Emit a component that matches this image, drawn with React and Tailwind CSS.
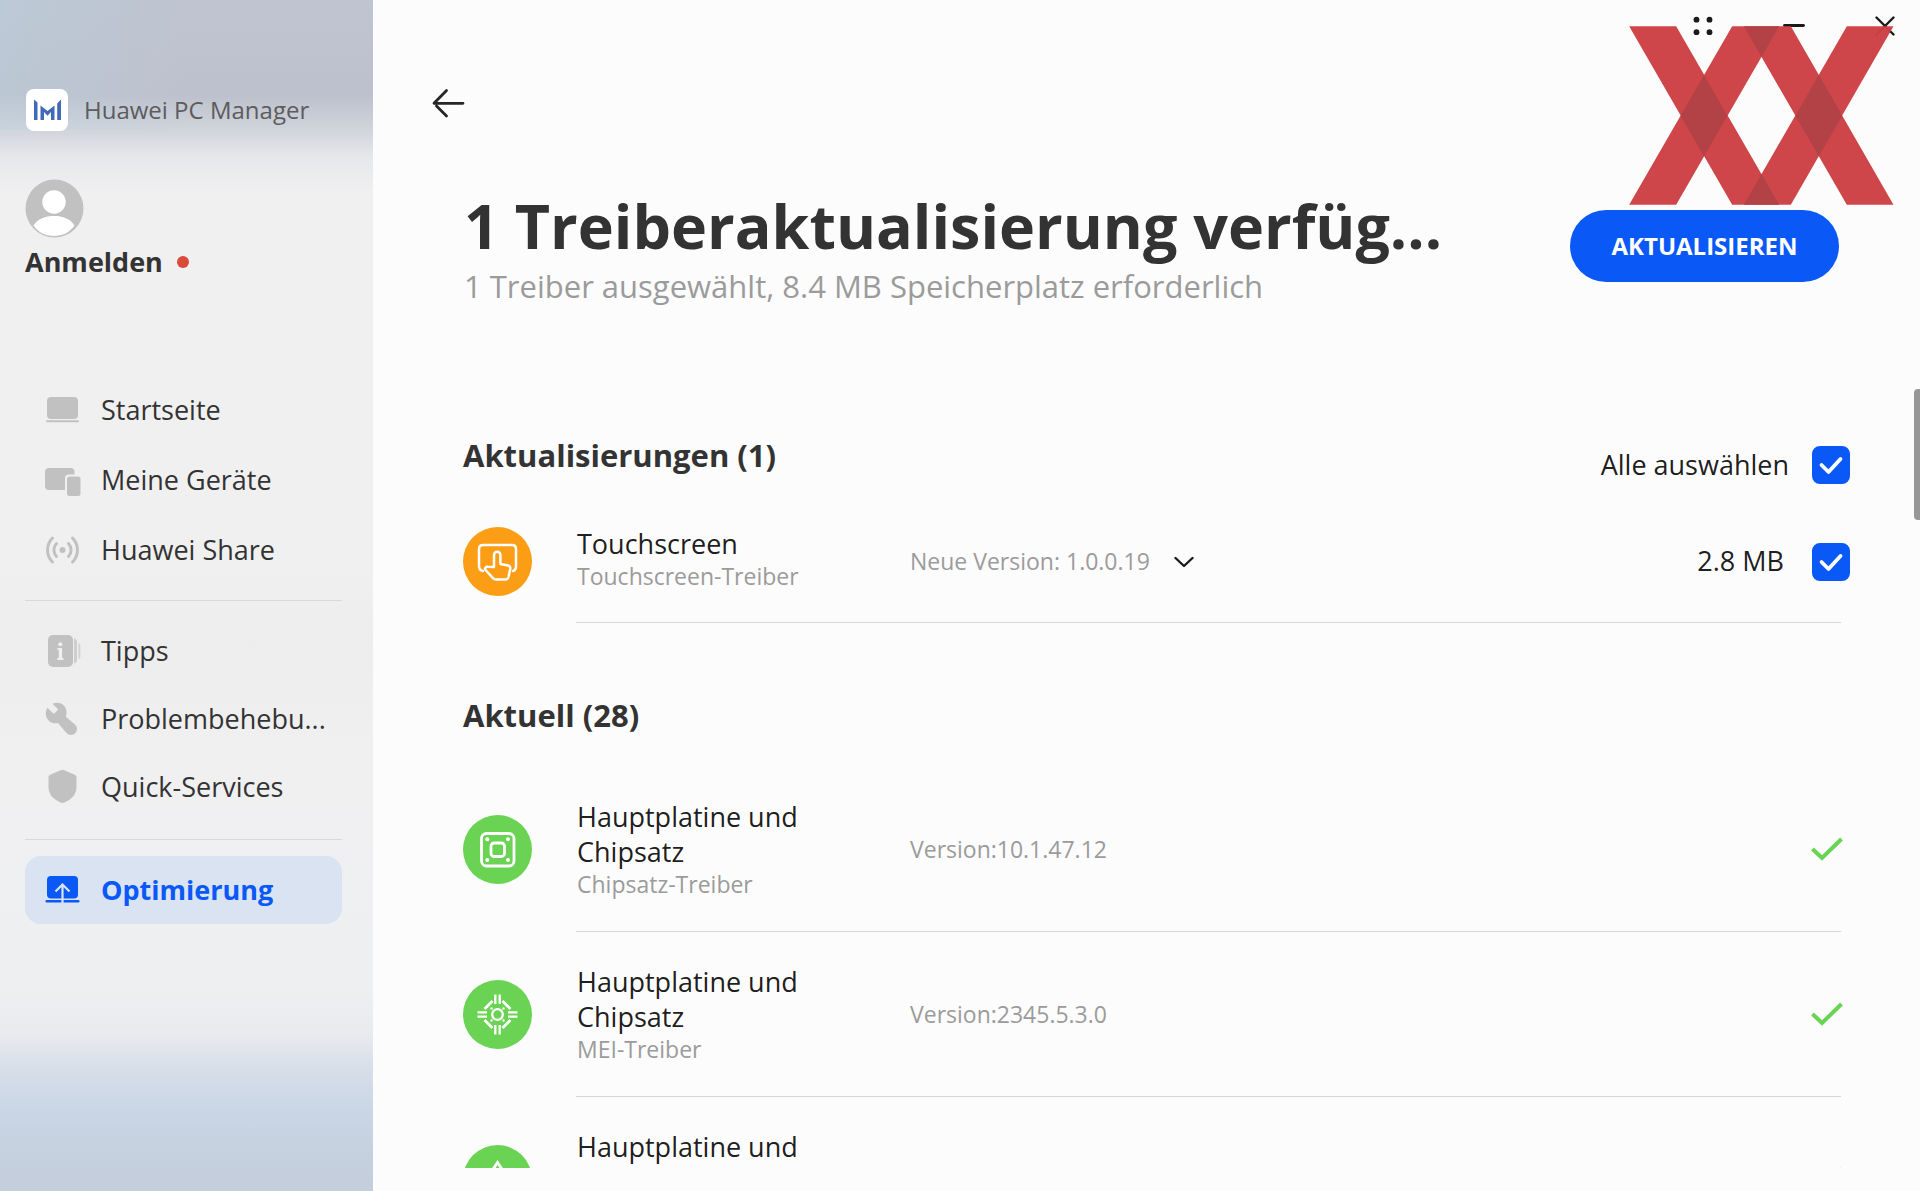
import React, { useState } from 'react';

const LaptopIcon = () => (
  <svg viewBox="0 0 36 36" className="h-9 w-9 shrink-0" fill="currentColor" aria-hidden="true">
    <rect x="2" y="5" width="31" height="22" rx="4" />
    <rect x="1" y="28.3" width="33" height="2" rx="1" />
  </svg>
);

const DevicesIcon = () => (
  <svg viewBox="0 0 36 36" className="h-9 w-9 shrink-0" fill="currentColor" aria-hidden="true">
    <path d="M4 6h21.5a4 4 0 0 1 4 4v2.500H24a4 4 0 0 0-4 4V28H4a4 4 0 0 1-4-4V10a4 4 0 0 1 4-4z" />
    <rect x="22" y="14.5" width="13.5" height="19.5" rx="2.5" />
  </svg>
);

const ShareIcon = () => (
  <svg viewBox="0 0 36 36" className="h-9 w-9 shrink-0" fill="none" stroke="currentColor" strokeWidth="3" strokeLinecap="round" aria-hidden="true">
    <circle cx="17.5" cy="18" r="3" fill="currentColor" stroke="none" />
    <path d="M11.500 11.500a9.500 9.500 0 0 0 0 13M23.500 11.500a9.500 9.500 0 0 1 0 13" />
    <path d="M7.500 6a17 17 0 0 0 0 24M27.500 6a17 17 0 0 1 0 24" />
  </svg>
);

const TipsIcon = () => (
  <svg viewBox="0 0 36 36" className="h-9 w-9 shrink-0" fill="currentColor" aria-hidden="true">
    <rect x="3" y="2" width="25" height="32" rx="5" />
    <path d="M29 5.500c2 .5 3 1.500 3 3.500v18c0 2-1 3-3 3.500z" opacity="0.7" />
    <path d="M33.500 10c1.200.6 1.800 1.400 1.800 2.800v10.400c0 1.400-.6 2.200-1.800 2.800z" opacity="0.6" />
    <g fill="#f0f0f0">
      <circle cx="15.3" cy="11.3" r="2" />
      <path d="M12.500 15h4.600v10h1.400v2h-6.200v-2h1.500v-8h-1.300z" />
    </g>
  </svg>
);

const WrenchIcon = () => (
  <svg viewBox="0 0 36 36" className="h-9 w-9 shrink-0" fill="currentColor" aria-hidden="true">
    <path d="M7.500 2.700 12.300 7.500a1.500 1.500 0 0 1 0 2.100L9.900 12a1.500 1.500 0 0 1-2.100 0L2.400 6.800A11.300 11.300 0 0 0 1 15c1.600 5.600 6.700 8.200 12 7l8.700 10.300a6 6 0 0 0 8.600-8.500L20.800 15.800C22.500 10 21 5 16.500 2.800A11 11 0 0 0 7.500 2.700z" />
  </svg>
);

const ShieldIcon = () => (
  <svg viewBox="0 0 36 36" className="h-9 w-9 shrink-0" fill="currentColor" aria-hidden="true">
    <path d="M15.600 1.200a4.500 4.500 0 0 1 3.800 0l9.800 4.400c1.500.7 2.300 1.600 2.300 3.200v9c0 7.500-4 12-12 15.600a4.500 4.500 0 0 1-4 0c-8-3.600-12-8.100-12-15.600v-9c0-1.600.8-2.500 2.300-3.200z" />
  </svg>
);

const OptimizeIcon = () => (
  <svg viewBox="0 0 36 36" className="h-9 w-9 shrink-0" fill="currentColor" aria-hidden="true">
    <rect x="2" y="4" width="31" height="22.5" rx="4" />
    <rect x="0.5" y="28" width="34" height="2.5" rx="1" />
    <path d="M17.500 31.500V13.500M10.500 19.500l7-7 7 7" fill="none" stroke="#dae3f2" strokeWidth="2.2" />
  </svg>
);

const TouchIcon = () => (
  <svg viewBox="0 0 69 69" className="h-full w-full" fill="none" stroke="#fff" strokeWidth="2.5" strokeLinecap="round" strokeLinejoin="round" aria-hidden="true">
    <path d="M20 44c-2.500-.5-4-2-4-5V22c0-2.500 1.500-4 4-4h29c2.500 0 4 1.500 4 4v17c0 3-1 4.500-3 5" />
    <path d="M31 40V28a3.200 3.200 0 0 1 6.400 0v9l7.600 1.500c1.800.5 2.500 1.700 2.200 3.500L45.500 50c-.5 1.700-1.300 2.500-3 2.500H33c-1.300 0-2.200-.4-3-1.300L22.500 43c-1.200-1.500.3-3.600 2.300-3.200z" />
  </svg>
);

const ChipsetIcon = () => (
  <svg viewBox="0 0 69 69" className="h-full w-full" fill="none" stroke="#fff" strokeWidth="2.8" aria-hidden="true">
    <rect x="18.5" y="18.5" width="32.5" height="32.5" rx="5" />
    <rect x="28" y="28" width="13.5" height="13.5" rx="3" />
    <g fill="#fff" stroke="none">
      <circle cx="24.3" cy="24.3" r="2" />
      <circle cx="45" cy="24.3" r="2" />
      <circle cx="24.3" cy="45" r="2" />
      <circle cx="45" cy="45" r="2" />
    </g>
  </svg>
);

const EngineIcon = () => (
  <svg viewBox="0 0 69 69" className="h-full w-full" fill="none" stroke="#fff" strokeWidth="2.3" aria-hidden="true">
    <circle cx="34.5" cy="34.5" r="5.3" />
    <path d="M32.300 14.500V24M36.700 14.500V24M32.300 45v9.500M36.700 45v9.500M14.500 32.300H24M14.500 36.700H24M45 32.300h9.500M45 36.700h9.500" />
    <path d="M21.500 29l8-8M39.500 21l8 8M21.500 40l8 8M39.500 48l8-8" strokeWidth="2.8" />
    <g fill="#fff" stroke="none">
      <circle cx="28.5" cy="28.5" r="1.2" />
      <circle cx="40.5" cy="28.5" r="1.2" />
      <circle cx="28.5" cy="40.5" r="1.2" />
      <circle cx="40.5" cy="40.5" r="1.2" />
    </g>
  </svg>
);

const TriangleIcon = () => (
  <svg viewBox="0 0 69 69" className="h-full w-full" fill="none" stroke="#fff" strokeWidth="2.8" aria-hidden="true">
    <path d="M34.500 17.500 52 44H17z" />
  </svg>
);

const mainNav = [
  { label: 'Startseite', icon: LaptopIcon },
  { label: 'Meine Geräte', icon: DevicesIcon },
  { label: 'Huawei Share', icon: ShareIcon }
];

const helpNav = [
  { label: 'Tipps', icon: TipsIcon },
  { label: 'Problembehebu...', icon: WrenchIcon },
  { label: 'Quick-Services', icon: ShieldIcon }
];

const currentDrivers = [
  { title: 'Hauptplatine und Chipsatz', driver: 'Chipsatz-Treiber', version: 'Version:10.1.47.12', icon: ChipsetIcon },
  { title: 'Hauptplatine und Chipsatz', driver: 'MEI-Treiber', version: 'Version:2345.5.3.0', icon: EngineIcon },
  { title: 'Hauptplatine und Chipsatz', driver: 'Chipsatz-Treiber', version: 'Version:10.1.47.12', icon: TriangleIcon }
];

function NavItem({ label, icon: Icon }) {
  return (
    <a href="#" className="flex h-17 items-center gap-5 rounded-2xl pl-5 text-[#333]">
      <span className="text-[#c1c1c1]"><Icon /></span>
      <span className="whitespace-nowrap">{label}</span>
    </a>
  );
}

function Checkbox({ id, checked, onChange }) {
  return (
    <span className="relative block h-[38px] w-[38px] shrink-0">
      <input
        id={id}
        type="checkbox"
        checked={checked}
        onChange={onChange}
        className="peer block h-full w-full appearance-none rounded-lg border-2 border-gray-400 checked:border-[#0a59f7] checked:bg-[#0a59f7]"
      />
      <svg viewBox="0 0 38 38" className="pointer-events-none absolute inset-0 hidden peer-checked:block" fill="none" stroke="#fff" strokeWidth="3.8" strokeLinecap="round" strokeLinejoin="round" aria-hidden="true">
        <path d="M9.500 19l7 7L28.500 13" />
      </svg>
    </span>
  );
}

function Sidebar() {
  return (
    <aside className="flex w-[373px] shrink-0 flex-col bg-[linear-gradient(to_right,rgba(185,210,225,0.35),rgba(185,200,220,0)_50%),linear-gradient(to_bottom,#bec4d0_0px,#bdc1cd_95px,#d0d4db_130px,#e7e8eb_158px,#f0f0f1_195px,#f0f0f1_560px,#ededee_640px,#f0f0f1_760px,#eeeff1_990px,#e8eaee_1035px,#d6dee9_1070px,#cad6e6_1110px,#c6d1df_1150px,#c3cddb_1191px)] bg-[length:100%_130px,100%_100%] bg-no-repeat pl-[25px] pr-[31px] pt-[89px]">
      <div className="flex items-center gap-4 pl-px">
        <svg viewBox="0 0 42 42" className="h-[42px] w-[42px] rounded-lg bg-white" fill="#4169b8" aria-hidden="true">
          <path d="M8 10.500l3.500 3V31H8zM35 10.500V31h-3.800V14.500zM14.500 16.500l7 5.500 7-5.500V31h-3.500v-8l-3.500 3.800-3.500-3.800v8h-3.500z" />
        </svg>
        <span className="whitespace-nowrap text-2xl text-[#5c5c5e]">Huawei PC Manager</span>
      </div>

      <button type="button" className="mt-12 text-left" aria-label="Anmelden">
        <svg viewBox="0 0 59 59" className="h-[59px] w-[59px]" aria-hidden="true">
          <circle cx="29.5" cy="29.5" r="29" fill="#c1c1c1" />
          <circle cx="29" cy="23" r="11.7" fill="#fff" />
          <path d="M8.500 46.500C13 39.500 20 37 29 37s16 2.500 20.500 9.500C44.500 53.500 37.500 57 29 57S13.500 53.500 8.500 46.500z" fill="#fff" />
        </svg>
        <span className="mt-1.5 flex items-center gap-[14px] text-[27px] font-bold leading-9 text-[#333]">
          Anmelden
          <span className="h-3 w-3 rounded-full bg-[#d94a38]" />
        </span>
      </button>

      <nav className="mt-24 text-[27px]">
        <div className="flex flex-col gap-0.5">
          {mainNav.map((item) => (
            <NavItem key={item.label} {...item} />
          ))}
        </div>
        <hr className="my-4 border-[#d9d9da]" />
        <div className="flex flex-col">
          {helpNav.map((item) => (
            <NavItem key={item.label} {...item} />
          ))}
        </div>
        <hr className="mb-4 mt-[18px] border-[#d9d9da]" />
        <a href="#" aria-current="page" className="flex h-17 items-center gap-5 rounded-2xl bg-[#dae3f2] pl-5 font-bold text-[#0a59f7]">
          <OptimizeIcon />
          Optimierung
        </a>
      </nav>
    </aside>
  );
}

function DriverInfo({ title, driver }) {
  return (
    <div className="w-[333px] shrink-0 pr-[80px]">
      <h3 className="text-[27px] leading-[35px] text-black/90">{title}</h3>
      <p className="text-[23px] leading-[30px] text-[#9b9b9b]">{driver}</p>
    </div>
  );
}

function App() {
  const [selected, setSelected] = useState(true);
  const toggle = () => setSelected(!selected);

  return (
    <div className="relative flex h-screen overflow-hidden bg-[#fcfcfc] font-['Segoe_UI','Open_Sans',sans-serif]">
      <Sidebar />

      <main className="flex min-w-0 flex-1 flex-col pb-[23px]">
        <div className="flex h-[51px] shrink-0 items-center justify-end gap-[21px] text-[#1a1a1a]">
          <button type="button" aria-label="Menü" className="flex h-full w-[70px] items-center justify-center">
            <svg viewBox="0 0 20 20" className="h-5 w-5" fill="currentColor">
              <circle cx="3.5" cy="3.7" r="2.9" />
              <circle cx="16.5" cy="3.7" r="2.9" />
              <circle cx="3.5" cy="16.2" r="2.9" />
              <circle cx="16.5" cy="16.2" r="2.9" />
            </svg>
          </button>
          <button type="button" aria-label="Minimieren" className="flex h-full w-[70px] items-center justify-center">
            <svg viewBox="0 0 22 22" className="h-[22px] w-[22px]" stroke="currentColor" strokeWidth="2.8" strokeLinecap="round">
              <path d="M1.500 10.500h19" />
            </svg>
          </button>
          <button type="button" aria-label="Schließen" className="flex h-full w-[70px] items-center justify-center">
            <svg viewBox="0 0 20 20" className="h-5 w-5" stroke="currentColor" strokeWidth="2.4" strokeLinecap="round">
              <path d="M1.500 1.500l17 17M18.500 1.500l-17 17" />
            </svg>
          </button>
        </div>

        <div className="flex h-[103px] shrink-0 items-center pl-[58px]">
          <button type="button" aria-label="Zurück">
            <svg viewBox="0 0 34 30" className="h-[30px] w-[34px]" fill="none" stroke="#262626" strokeWidth="2.8" strokeLinecap="round" strokeLinejoin="round">
              <path d="M15.500 2.500L3 15.300h29M5.500 18l10 10" />
            </svg>
          </button>
        </div>

        <header className="mt-8 flex shrink-0 items-center justify-between pl-[91px] pr-[81px]">
          <div className="min-w-0">
            <h1 className="whitespace-nowrap text-[61px] font-bold leading-20 text-[#333]">1 Treiberaktualisierung verfüg...</h1>
            <p className="text-[31px] leading-10 text-[#9b9b9b]">1 Treiber ausgewählt, 8.4 MB Speicherplatz erforderlich</p>
          </div>
          <button type="button" className="h-18 w-[269px] shrink-0 rounded-full bg-[#0a59f7] text-2xl font-bold text-white">
            AKTUALISIEREN
          </button>
        </header>

        <div className="min-h-0 flex-1 overflow-hidden pl-[90px] pr-[70px] pt-[129px]">
          <section>
            <div className="flex h-[50px] justify-between">
              <h2 className="text-[31px] font-bold leading-10 text-[#333]">Aktualisierungen (1)</h2>
              <div className="flex h-10 items-center gap-[23px] self-end">
                <label htmlFor="select-all" className="text-[27px] text-black/90">Alle auswählen</label>
                <Checkbox id="select-all" checked={selected} onChange={toggle} />
              </div>
            </div>
            <ul className="mt-4">
              <li>
                <div className="flex items-center py-[25px]">
                  <span className="h-[69px] w-[69px] shrink-0 rounded-full bg-[#fb9d15]"><TouchIcon /></span>
                  <div className="ml-[45px] flex flex-1 items-center">
                    <div className="pb-1.5">
                      <DriverInfo title="Touchscreen" driver="Touchscreen-Treiber" />
                    </div>
                    <button type="button" className="flex items-center gap-6 text-[23px] text-[#9b9b9b]">
                      Neue Version: 1.0.0.19
                      <svg viewBox="0 0 20 12" className="h-3 w-5" fill="none" stroke="#1a1a1a" strokeWidth="2.4" strokeLinecap="round" strokeLinejoin="round" aria-hidden="true">
                        <path d="M1.500 2l8.500 8 8.500-8" />
                      </svg>
                    </button>
                    <label htmlFor="touchscreen" className="ml-auto mr-7 text-[27px] text-black/90">2.8 MB</label>
                    <Checkbox id="touchscreen" checked={selected} onChange={toggle} />
                  </div>
                </div>
                <hr className="ml-[113px] mr-[9px] border-[#d6d6d6]" />
              </li>
            </ul>
          </section>

          <section className="pt-18">
            <h2 className="text-[31px] font-bold leading-10 text-[#333]">Aktuell (28)</h2>
            <ul className="mt-8">
              {currentDrivers.map(({ title, driver, version, icon: Icon }, index) => (
                <li key={index}>
                  <div className="flex items-center py-8">
                    <span className="h-[69px] w-[69px] shrink-0 rounded-full bg-[#6ad353]"><Icon /></span>
                    <div className="ml-[45px] flex flex-1 items-center">
                      <DriverInfo title={title} driver={driver} />
                      <span className="text-[23px] text-[#9b9b9b]">{version}</span>
                      <svg viewBox="0 0 32 24" className="ml-auto mr-[7px] h-6 w-8" fill="none" stroke="#6ad353" strokeWidth="4" aria-label="Aktuell">
                        <path d="M1.500 12l9.500 9L30.500 2" />
                      </svg>
                    </div>
                  </div>
                  <hr className="ml-[113px] mr-[9px] border-[#d6d6d6]" />
                </li>
              ))}
            </ul>
          </section>
        </div>
      </main>

      <div className="absolute right-0 top-[389px] h-[131px] w-[6px] rounded-l bg-[#979797]" />

      <svg viewBox="269 78 794 537" className="pointer-events-none absolute right-[26px] top-[26px] h-[179px] w-[265px]" aria-hidden="true">
        <g opacity="0.97">
          <path fill="#cd4145" d="M269 79h141l309 535H578zM578 79h141L410 614H269zM613 79h141l308 535H922zM922 79h140L754 614H613z" />
          <path fill="#b03d41" d="M493.500 225l70.500 122-70.500 122L423 347zM838 225l70.500 122L838 469l-70.500-122zM613 79h106l-53 92zM613 614h106l-53-92z" />
        </g>
      </svg>
    </div>
  );
}

export default App;
